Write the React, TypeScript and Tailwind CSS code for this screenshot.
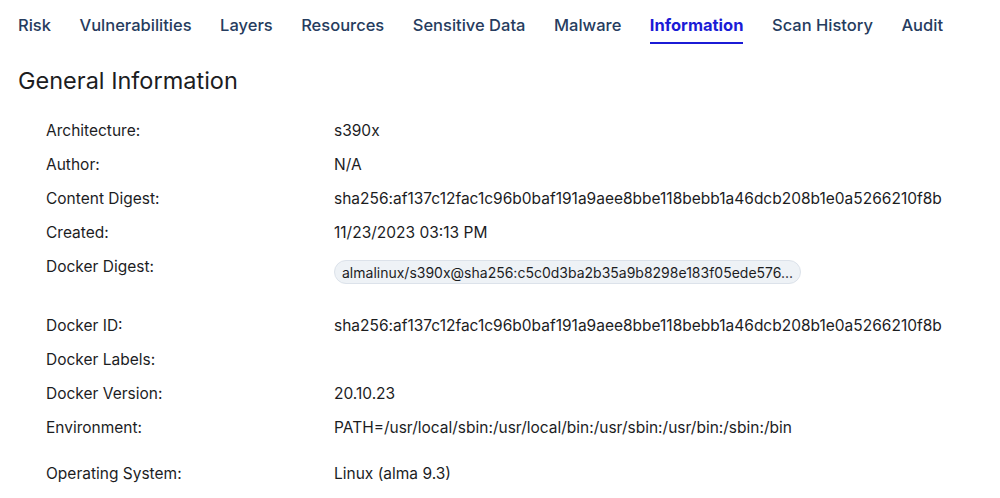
import React from 'react';

const tabs = ['Risk', 'Vulnerabilities', 'Layers', 'Resources', 'Sensitive Data', 'Malware', 'Information', 'Scan History', 'Audit'];

const digest = 'sha256:af137c12fac1c96b0baf191a9aee8bbe118bebb1a46dcb208b1e0a5266210f8b';

function Row({ label, children, className = 'h-[34px]' }: { label: string; children?: React.ReactNode; className?: string }) {
    return (
        <div className={`grid grid-cols-[288px_1fr] ${className}`}>
            <div className="leading-[34px]">{label}</div>
            <div className="leading-[34px]">{children}</div>
        </div>
    );
}

export default function App() {
    return (
        <div className="min-h-screen bg-white text-[#1c1d1f]" style={{ fontFamily: 'Inter, "Noto Sans", sans-serif' }}>
            {/* Tabs */}
            <nav className="flex gap-[28.5px] px-[18px] pt-[13px]">
                {tabs.map((t) => {
                    const active = t === 'Information';
                    return (
                        <div
                            key={t}
                            className={`text-[16.5px] leading-6 pb-[5px] border-b-2 ${
                                active ? 'font-bold text-[#1b1bd6] border-[#1b1bd6]' : 'font-medium text-[#263c5e] border-transparent'
                            }`}
                        >
                            {t}
                        </div>
                    );
                })}
            </nav>

            <h1 className="mt-[21px] px-[18px] text-[23.5px] leading-8 font-normal text-[#1c1d1f]">General Information</h1>

            <div className="mt-[17px] pl-[46px] text-[15.5px]">
                <Row label="Architecture:">s390x</Row>
                <Row label="Author:">N/A</Row>
                <Row label="Content Digest:">{digest}</Row>
                <Row label="Created:">11/23/2023 03:13 PM</Row>
                <div className="grid grid-cols-[288px_1fr] h-[59px]">
                    <div className="leading-[34px]">Docker Digest:</div>
                    <div className="pt-[10px]">
                        <span className="inline-flex h-[24px] items-center rounded-full border border-[#dce2ea] bg-[#eef2f6] px-[7px] text-[14px]">
                            almalinux/s390x@sha256:c5c0d3ba2b35a9b8298e183f05ede576...
                        </span>
                    </div>
                </div>
                <Row label="Docker ID:">{digest}</Row>
                <Row label="Docker Labels:" />
                <Row label="Docker Version:">20.10.23</Row>
                <Row label="Environment:" className="h-[46px]">
                    PATH=/usr/local/sbin:/usr/local/bin:/usr/sbin:/usr/bin:/sbin:/bin
                </Row>
                <Row label="Operating System:">Linux (alma 9.3)</Row>
            </div>
        </div>
    );
}
